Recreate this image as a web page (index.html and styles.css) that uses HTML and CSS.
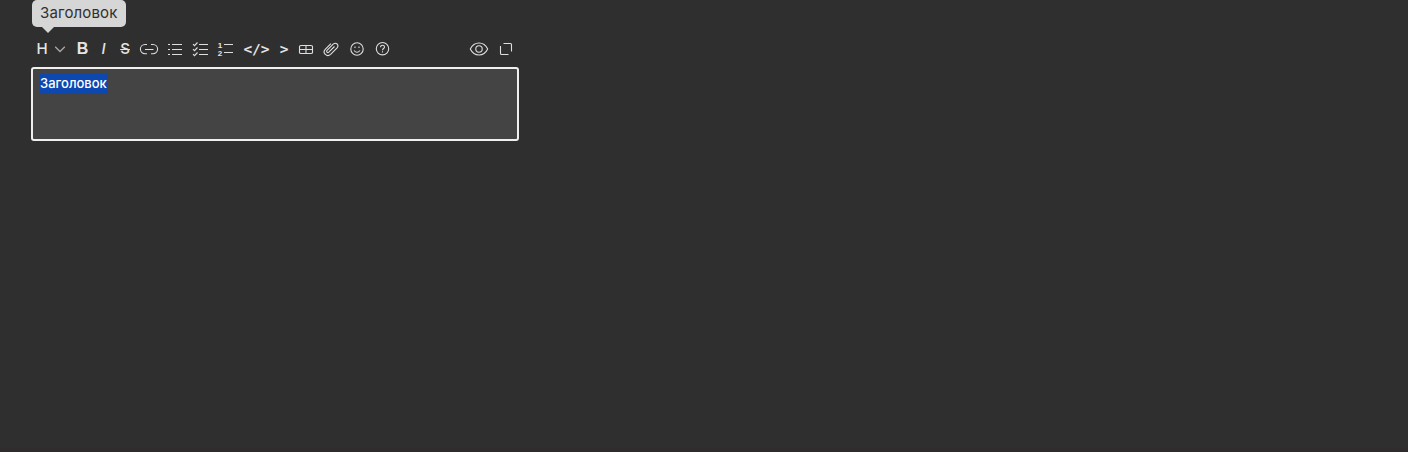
FILE: index.html
```html
<!DOCTYPE html>
<html lang="ru">
<head>
<meta charset="utf-8">
<title>Редактор</title>
<link rel="stylesheet" href="styles.css">
</head>
<body>
<main class="editor">
  <div class="tip-row"><div class="tip">Заголовок</div></div>
  <div class="toolbar">
    <span class="heading">H</span>
    <svg viewBox="0 0 24 20"><path class="dim" d="M7.200 7.700l4.800 4.800 4.800-4.800"/></svg>
    <span class="bold">B</span>
    <span class="italic">I</span>
    <span class="strike">S</span>
    <svg viewBox="0 0 26 20"><path d="M11 5.500H9a4.600 4.600 0 0 0 0 9.200h2M15 5.500h2a4.600 4.600 0 0 1 0 9.200h-2M9 10.500h8.500"/></svg>
    <svg viewBox="0 0 26 20"><path d="M6 5.500h2M6 10.500h2M6 15.500h2M10 5.500h10M10 10.500h10M10 15.500h10"/></svg>
    <svg viewBox="0 0 25 20"><path d="M11 5.500h9M11 10.500h9M11 15.500h9M5 5.200l1.500 1.500 3-3.200M5 10.200l1.500 1.500 3-3.200M5 15.200l1.500 1.500 3-3.200"/></svg>
    <svg viewBox="0 0 25 20"><path d="M11 5.500h9M11 13.500h9"/><text x="4.800" y="9">1</text><text x="4.800" y="17">2</text></svg>
    <span class="code">&lt;/&gt;</span>
    <span class="code">&gt;</span>
    <svg viewBox="0 0 26 20"><path d="M8 6.500h10q1.500 0 1.500 1v6q0 1-1.500 1H8q-1.500 0-1.500-1v-6q0-1 1.500-1zM6.500 10.500h13M13 6.500v8"/></svg>
    <svg viewBox="0 0 24 20"><path d="M15.500 7.500l-5.700 5.600c-1.300 1.200-3-.4-1.800-1.700l6.200-6.200c2.600-2.500 6.500.8 3.900 3.600l-6.500 6.500c-3.500 3.300-8.700-1.300-5.400-5l5.700-5.700"/></svg>
    <svg viewBox="0 0 28 20"><circle cx="14" cy="10" r="6.200"/><path d="M11 11.500q3 3.500 6 0M12 7.500v1.500M16 7.500v1.500"/></svg>
    <svg viewBox="0 0 23 20"><circle cx="11.500" cy="9.700" r="6.200"/><path d="M9.500 8.200c0-2.700 4-2.600 4-.2 0 1.500-2 1.500-2 3.200M11.500 12.300v1.200"/></svg>
    <span></span>
    <svg viewBox="0 0 28 20"><path d="M5.300 10c3.900-8 13.500-8 17.400 0-3.900 8-13.500 8-17.400 0z"/><circle cx="14" cy="10" r="3.200"/></svg>
    <svg viewBox="0 0 26 20"><path d="M10.500 4.500h7q1 0 1 1V12.500M7.500 7v7.500q0 1 1 1H15.500"/></svg>
  </div>
  <div class="field"><span class="selected">Заголовок</span></div>
</main>
<div class="edge"></div>
</body>
</html>
```
FILE: styles.css
```css
body {
  margin: 0;
  height: 452px;
  display: flex;
  flex-direction: column;
  justify-content: space-between;
  overflow: hidden;
  background: #2f2f2f;
  color: #e4e4e4;
  font-family: Inter, "Noto Sans", sans-serif;
}
.editor { padding-left: 31px; width: 488px; }
.tip-row { height: 39px; display: flex; align-items: flex-start; padding-left: 1px; }
.tip {
  position: relative;
  box-sizing: border-box;
  width: 94px;
  height: 27px;
  padding-left: 8px;
  border-radius: 5px;
  background: #d6d6d6;
  color: #303030;
  font-size: 15px;
  letter-spacing: 0.15px;
  line-height: 26px;
}
.tip::after {
  content: "";
  position: absolute;
  left: 10px;
  top: 27px;
  border: 6px solid transparent;
  border-top-color: #d6d6d6;
  border-bottom: 0;
}
.toolbar {
  display: grid;
  grid-template-columns: 12px 24px 21px 21px 22px 26px 26px 25px 25px 37px 18px 26px 24px 28px 23px 71px 28px 26px;
  height: 20px;
  padding-left: 5px;
  line-height: 20px;
  font-size: 15px;
  text-align: center;
}
.toolbar svg { display: block; width: 100%; height: 20px; }
.toolbar path, .toolbar circle {
  fill: none;
  stroke: #dedede;
  stroke-width: 1.1;
}
.toolbar .dim { stroke: #a8a8a8; stroke-width: 1.3; }
.toolbar text { fill: #e4e4e4; font: bold 8px "Liberation Sans", sans-serif; }
.heading { font-weight: 500; }
.bold { font-size: 16px; font-weight: 700; font-family: "Liberation Sans", sans-serif; }
.italic { font-style: italic; font-weight: 500; }
.strike { font-weight: 500; text-decoration: line-through 1px; }
.code { font: bold 14.500px/20px "DejaVu Sans Mono", monospace; white-space: nowrap; }
.field {
  box-sizing: border-box;
  width: 488px;
  height: 74px;
  margin-top: 8px;
  padding: 5px 7px;
  border: 2px solid #f0f0f0;
  border-radius: 3px;
  background: #444;
  font-size: 13px;
  font-weight: 500;
  line-height: 18px;
}
.selected {
  display: block;
  box-sizing: border-box;
  width: 68px;
  height: 20px;
  background: #0d47b0;
  color: #fff;
  white-space: nowrap;
}
.edge { height: 4px; background: #302c2d; }
```
